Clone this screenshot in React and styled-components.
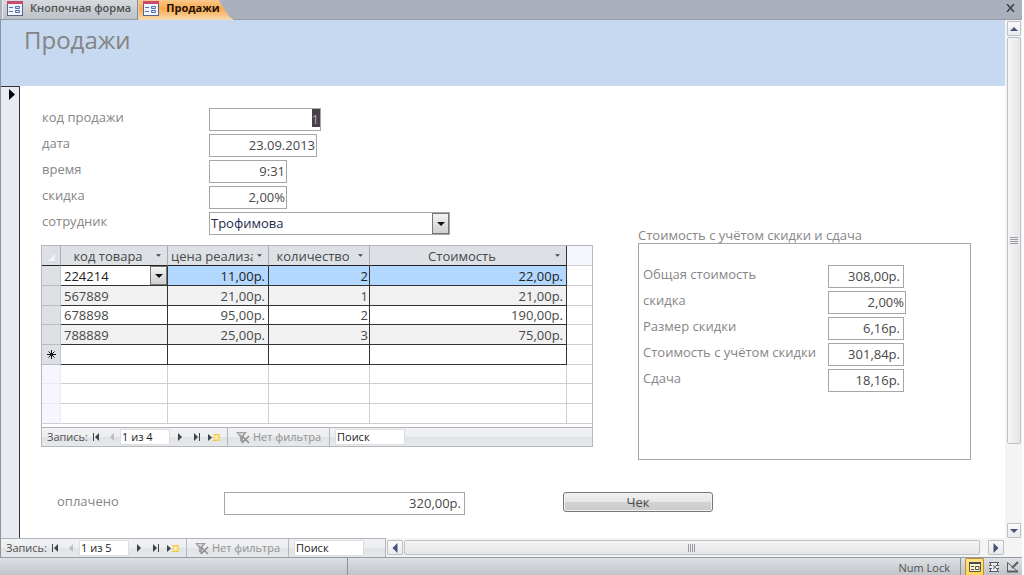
import React, { useState } from 'react';
import styled, { createGlobalStyle, css } from 'styled-components';

const GlobalStyle = createGlobalStyle`
  * {
    box-sizing: border-box;
  }

  body {
    margin: 0;
    background: #fff;
    color: #484848;
    font-family: 'Open Sans', 'Noto Sans', sans-serif;
    font-size: 13px;
    line-height: 18px;
  }

  button,
  input,
  select {
    margin: 0;
    padding: 0;
    border: 0;
    border-radius: 0;
    background: none;
    color: inherit;
    font: inherit;
    outline: none;
  }

  svg {
    display: block;
    flex: none;
  }
`;

const Window = styled.div`
  display: flex;
  flex-direction: column;
  min-height: 100vh;
  padding-right: 2px;
`;

/* ---------- tabs ---------- */

const TabBar = styled.nav`
  display: flex;
  height: 20px;
  padding-left: 2px;
  background: #abb1bc;
  border-bottom: 1px solid #949ba7;
`;

const Tab = styled.button`
  display: flex;
  align-items: center;
  gap: 7px;
  height: 19px;
  padding: 0 6px 3px 4px;
  border-left: 1px solid #e8ebee;
  border-right: 1px solid #858b95;
  background: linear-gradient(#d6dade, #bcc1c8);
  color: #505050;
  font-size: 11px;
  font-weight: 600;
  white-space: nowrap;

  ${({ $active }) => $active && css`
    height: 20px;
    padding: 0 14px 4px 4px;
    border-right: 0;
    border-left-color: #f6d9ae;
    background: linear-gradient(#f9c88c, #fba94a 45%, #f6dcb4);
    color: #1c1208;
    font-weight: 700;
    clip-path: polygon(0 0, calc(100% - 15px) 0, calc(100% - 5px) 16px, 100% 100%, 0 100%);
  `}
`;

const CloseButton = styled.button`
  display: flex;
  align-items: center;
  margin-left: auto;
  padding: 0 7px 4px;
`;

/* ---------- document ---------- */

const Document = styled.div`
  flex: 1;
  display: flex;
  border-left: 1px solid #8f949c;
`;

const FormPane = styled.div`
  flex: 1;
  min-width: 0;
  display: flex;
  flex-direction: column;
`;

const FormHeader = styled.header`
  height: 66px;
  padding: 3px 23px;
  background: #c7d9f0;
  color: #848484;

  h1 {
    margin: 0;
    font-size: 24px;
    line-height: 33px;
    font-weight: 400;
  }
`;

const FormBody = styled.div`
  flex: 1;
  display: flex;
`;

const RecordSelector = styled.div`
  width: 19px;
  padding: 2px 0 0 8px;
  border-top: 1px solid #333;
  border-right: 1px solid #333;
  background: #e8ebf1;
`;

const Detail = styled.main`
  flex: 1;
  min-width: 0;
  padding: 22px 34px 20px 21px;
`;

const Columns = styled.div`
  display: grid;
  grid-template-columns: minmax(0, 552px) minmax(0, 333px);
  align-items: start;
  gap: 45px;
`;

const Fields = styled.div`
  display: grid;
  gap: 3px;
  padding-left: ${({ $indent }) => $indent}px;
`;

const FieldRow = styled.div`
  display: grid;
  grid-template-columns: ${({ $labelWidth }) => $labelWidth}px minmax(0, 1fr);

  label {
    color: #868686;
    white-space: nowrap;
  }
`;

const TextBox = styled.input`
  width: ${({ $width }) => $width}px;
  max-width: 100%;
  height: 23px;
  padding: 0 ${({ $pad = 2 }) => $pad}px 2px 2px;
  border: 1px solid #a6a6a6;
  background: #fff;
  text-align: right;

  ${({ $selected }) => $selected && css`
    padding-right: 1px;
    background: linear-gradient(#454247, #454247) right top / 8px 18px no-repeat;
    color: #c79ac4;
  `}
`;

const ComboBox = styled.div`
  display: flex;
  width: ${({ $width }) => ($width ? `${$width}px` : '100%')};
  height: ${({ $width }) => ($width ? 23 : 19)}px;
  border: ${({ $width }) => ($width ? '1px solid #a6a6a6' : 0)};
  background: #fff;
  color: ${({ $width }) => ($width ? '#1f2a4d' : '#222')};
  position: relative;

  select {
    width: 100%;
    padding: 0 20px ${({ $width }) => ($width ? 2 : 0)}px ${({ $width }) => ($width ? 1 : 3)}px;
    appearance: none;
  }
`;

/* lies over the right end of the select */
const ComboArrow = styled.span`
  position: absolute;
  top: 0;
  right: 0;
  bottom: 0;
  display: flex;
  align-items: center;
  justify-content: center;
  width: 17px;
  border: 1px solid #777;
  background: linear-gradient(#f3f3f3, #cfcfcf);
  pointer-events: none;
`;

/* ---------- datasheet ---------- */

const Subform = styled.section`
  margin-top: 10px;
  border: 1px solid #b4b7bc;
`;

const Sheet = styled.table`
  width: 100%;
  table-layout: fixed;
  border-collapse: separate;
  border-spacing: 0;

  th,
  td {
    height: 20px;
    padding: 0;
    border-right: 1px solid #cfcfcf;
    border-bottom: 1px solid #cfcfcf;
    line-height: 18px;
    overflow: hidden;
    white-space: nowrap;
  }

  th:last-child,
  td:last-child {
    border-right: 0;
  }

  thead th {
    border-right-color: #a9adb3;
    border-bottom-color: #222;
    background: #dde1e6;
    font-weight: 400;
  }

  thead th:last-child {
    border-bottom-color: #cfcfcf;
    background: #f5f6fe;
  }

  thead th:nth-last-child(2) {
    border-right-color: #333;
  }
`;

const HeadCell = styled.div`
  display: flex;
  align-items: center;
  height: 19px;
  padding: 0 6px 0 3px;

  span {
    flex: 1;
    min-width: 0;
    overflow: hidden;
    text-align: center;
  }

  button {
    padding: 0 0 0 4px;
  }
`;

const Row = styled.tr`
  /* a record line is a little under 20px high */
  &:nth-child(3n) th,
  &:nth-child(3n) td {
    height: 19px;
    line-height: 17px;
  }

  th {
    border-right-color: #c4c8ce;
    border-bottom-color: #b9bdc4;
    background: ${({ $blank }) => ($blank ? '#f5f6fe' : '#dde1e6')};

    ${({ $blank }) => $blank && css`
      border-color: #e9eaf2;
    `}
  }

  td {
    text-align: right;
  }

  ${({ $blank, $current, $alt }) => !$blank && css`
    td:not(:last-child) {
      border-color: #333;
      background: ${$current ? '#b3d8ff' : $alt ? '#f1f1f1' : '#fff'};
      color: ${$current ? '#222' : 'inherit'};
    }
  `}

  &:last-child th,
  &:last-child td {
    border-bottom-color: #cfcfcf;
  }
`;

const Cell = styled.td`
  && {
    padding: 0 ${({ $money }) => ($money ? 3 : 1)}px 0 3px;
    text-align: ${({ $left }) => ($left ? 'left' : 'right')};
  }
`;

const ComboCell = styled.td`
  && {
    padding: 0;
  }
`;

const NewMark = styled.span`
  display: flex;
  justify-content: center;
`;

/* ---------- totals ---------- */

const Totals = styled.section`
  margin-top: 120px;

  h2 {
    margin: 0;
    color: #868686;
    font-size: 13px;
    line-height: 15px;
    font-weight: 400;
    white-space: nowrap;
  }
`;

const TotalsBox = styled.div`
  min-height: 217px;
  padding: 21px 4px;
  border: 1px solid #a6a6a6;
`;

const PayRow = styled.div`
  display: flex;
  align-items: flex-start;
  gap: 98px;
  margin-top: 32px;
  padding-left: 16px;
`;

const CheckButton = styled.button`
  width: 150px;
  height: 20px;
  border: 1px solid #777;
  border-radius: 3px;
  background: linear-gradient(#f0f0f0, #e6e6e6 50%, #d2d2d2 52%, #cbcbcb);
  box-shadow: inset 0 0 0 1px #f2f2f2;
`;

/* ---------- record navigation ---------- */

const NavBar = styled.div`
  display: flex;
  align-items: center;
  height: 19px;
  border-top: 1px solid #b0b4ba;
  background: linear-gradient(#f1f2f4, #eceef0 48%, #e1e4e7 52%, #e6e8eb);
  color: #505050;
  font-size: 11px;
  line-height: 16px;
  white-space: nowrap;

  ${Subform} & {
    margin-top: 3px;
  }
`;

const NavLabel = styled.label`
  width: 41px;
  margin-left: 5px;
`;

const NavButton = styled.button`
  display: flex;
  align-items: center;
  justify-content: center;
  width: ${({ $wide }) => ($wide ? 19 : 16)}px;
  height: 18px;
  color: #3f4249;

  &:disabled {
    color: #b9bcc2;
  }
`;

const NavInput = styled.input`
  width: ${({ $width }) => $width}px;
  height: 16px;
  padding: 0 1px;
  border: 1px solid #dcdee1;
  background: #fff;
  color: #222;

  &::placeholder {
    color: #222;
    opacity: 1;
  }
`;

const FilterButton = styled.button`
  display: flex;
  align-items: center;
  gap: 3px;
  width: 103px;
  height: 18px;
  margin: 0 5px 0 3px;
  padding-left: 8px;
  border-left: 1px solid #b4b8be;
  border-right: 1px solid #b4b8be;
  color: #929292;
`;

/* ---------- scroll bars ---------- */

const VScroll = styled.div`
  display: flex;
  flex-direction: column;
  width: 17px;
  padding: 1px 1px 19px 2px;
  background: #f4f4f5;
`;

const HScroll = styled.div`
  flex: 1;
  min-width: 0;
  display: flex;
  align-items: center;
  gap: 1px;
  height: 19px;
  padding: 0 1px;
  border-left: 1px solid #b0b4ba;
  background: #f4f4f5;
`;

const ScrollButton = styled.button`
  display: flex;
  align-items: center;
  justify-content: center;
  width: ${({ $wide }) => ($wide ? 16 : 14)}px;
  height: 15px;
  border: 1px solid #bcc0c7;
  border-radius: 1px;
  background: linear-gradient(#fafafa, #e9eaec);
  color: #46547a;
`;

const Thumb = styled.div`
  display: flex;
  align-items: center;
  justify-content: center;
  flex: ${({ $share }) => $share} 1 0;
  height: 15px;
  margin-top: ${({ $vertical }) => ($vertical ? 1 : 0)}px;
  border: 1px solid #bcc0c7;
  border-radius: 2px;
  background: linear-gradient(${({ $vertical }) => ($vertical ? '90deg, ' : '')}#f5f5f5, #e5e6e8);
`;

const Track = styled.div`
  flex: ${({ $share }) => $share} 1 0;
`;

const FormFooter = styled.div`
  display: flex;

  ${NavBar} {
    width: 384px;
  }
`;

/* ---------- status bar ---------- */

const StatusBar = styled.footer`
  display: flex;
  align-items: stretch;
  height: 18px;
  border-top: 1px solid #949aa3;
  background: linear-gradient(#dee2e7, #c0c4c9);
  color: #505050;
  font-size: 11px;
  line-height: 19px;
`;

const StatusCell = styled.div`
  width: ${({ $width }) => ($width ? `${$width}px` : 'auto')};
  flex: ${({ $width }) => ($width ? 'none' : 1)};
  padding-right: 10px;
  border-right: 1px solid #8b9097;
  text-align: right;
`;

const ViewButtons = styled.div`
  display: flex;
  width: 61px;
  padding-left: 4px;
`;

const ViewButton = styled.button`
  display: flex;
  align-items: center;
  justify-content: center;
  width: 19px;
  border: 1px solid ${({ $active }) => ($active ? '#c08c2c' : 'transparent')};
  border-bottom: 0;
  border-radius: 2px 2px 0 0;
  background: ${({ $active }) => ($active ? 'linear-gradient(#ffe58a, #ffd557)' : 'none')};
`;

/* ---------- icons ---------- */

const FormIcon = () => (
  <svg width="16" height="15" viewBox="0 0 16 15">
    <rect x="0" y="2" width="16" height="13" fill="#56658c" />
    <rect x="1" y="3" width="14" height="11" fill="#f1f4fb" />
    <rect x="0" y="0" width="16" height="3" fill="#c94a6e" />
    <path d="M2 6.500h4M2 10.500h4" stroke="#5470b0" />
    <path d="M8.500 5.500h4v2h-4zM8.500 9.500h4v2h-4z" fill="#dfe6f6" stroke="#5470b0" />
  </svg>
);

const Caret = ({ width = 8, height = 4, color = '#111' }) => (
  <svg width={width} height={height} viewBox="0 0 8 4">
    <path d="M0 0h8L4 4z" fill={color} />
  </svg>
);

const arrows = {
  first: 'M1 0h1v8H1zM7 0v8L3 4z',
  prev: 'M6 0v8L2 4z',
  next: 'M2 0v8l4-4z',
  last: 'M1 0v8l4-4zM6 0h1v8H6z',
  up: 'M0 6h8L4 2z',
  down: 'M0 2h8L4 6z',
};

const Arrow = ({ name, size = 8 }) => (
  <svg width={size} height={size} viewBox="0 0 8 8">
    <path d={arrows[name]} fill="currentColor" />
  </svg>
);

const NewRecordIcon = () => (
  <svg width="13" height="9" viewBox="0 0 13 9">
    <path d="M0 1v7l4-3.500z" fill="#3f4249" />
    <rect x="6" y="1" width="6" height="7" fill="#f7dc74" />
    <path d="M5 1.500h7M5 4.500h7M5 7.500h7" stroke="#e9c03c" strokeDasharray="1 1" />
    <circle cx="8.500" cy="4.500" r="1.500" fill="#fdf3c0" />
  </svg>
);

const FilterIcon = () => (
  <svg width="14" height="13" viewBox="0 0 14 13">
    <path d="M0 1h11L7 6v6L4 10V6z" fill="#a0a0a0" />
    <path d="M2 2h6L6 5z" fill="#d8d8d8" />
    <path d="M6 5l7 7M13 5l-7 7" stroke="#8d8d8d" strokeWidth="1.500" />
  </svg>
);

const Grip = ({ vertical }) => (
  <svg width="8" height="8" viewBox="0 0 8 8">
    <path
      d={vertical ? 'M0 1.500h8M0 3.500h8M0 5.500h8M0 7.500h8' : 'M.5 0v8M2.500 0v8M4.500 0v8M6.500 0v8'}
      stroke="#9a9da2"
    />
  </svg>
);

const FormViewIcon = () => (
  <svg width="12" height="10" viewBox="0 0 12 10">
    <path d="M.5 .5h11v9H.5z" fill="#f9f3d2" stroke="#5b5540" />
    <path d="M0 1h12" stroke="#4b4b4b" strokeWidth="2" />
    <path d="M2 4.500h3M2 7.500h3M6.500 4.500h3.500v3H6.500z" fill="none" stroke="#5b5540" />
  </svg>
);

const LayoutViewIcon = () => (
  <svg width="12" height="12" viewBox="0 0 12 12">
    <path d="M2 2h8v8H2z" fill="#eceef0" />
    <path d="M1 1.500h10M1 10.500h10M1 4.500h3M8 4.500h3M1 7.500h3M8 7.500h3M2.500 1v3M9.500 1v3M2.500 8v3M9.500 8v3M5 4.500l3 1.500-3 1.500" fill="none" stroke="#5a5d61" />
  </svg>
);

const DesignViewIcon = () => (
  <svg width="13" height="12" viewBox="0 0 13 12">
    <path d="M1.500 1.500v9h10z" fill="#d9dcdf" stroke="#5a5d61" />
    <path d="M12 1L6 7" stroke="#5a5d61" strokeWidth="2" />
    <path d="M1 10.500h11" stroke="#5a5d61" strokeWidth="2" />
  </svg>
);

/* ---------- data ---------- */

const saleFields = [
  { id: 'sale', label: 'код продажи', value: '1', width: 112, selected: true },
  { id: 'date', label: 'дата', value: '23.09.2013', width: 108, pad: 1 },
  { id: 'time', label: 'время', value: '9:31', width: 78, pad: 1 },
  { id: 'discount', label: 'скидка', value: '2,00%', width: 78, pad: 1 },
];

const totalFields = [
  { id: 'total', label: 'Общая стоимость', value: '308,00р.', width: 76, pad: 3 },
  { id: 'rate', label: 'скидка', value: '2,00%', width: 78, pad: 1 },
  { id: 'size', label: 'Размер скидки', value: '6,16р.', width: 76, pad: 3 },
  { id: 'net', label: 'Стоимость с учётом скидки', value: '301,84р.', width: 76, pad: 3 },
  { id: 'change', label: 'Сдача', value: '18,16р.', width: 76, pad: 3 },
];

const columns = ['код товара', 'цена реализации', 'количество', 'Стоимость'];

const items = [
  { code: '224214', price: '11,00р.', count: 2, sum: '22,00р.' },
  { code: '567889', price: '21,00р.', count: 1, sum: '21,00р.' },
  { code: '678898', price: '95,00р.', count: 2, sum: '190,00р.' },
  { code: '788889', price: '25,00р.', count: 3, sum: '75,00р.' },
];

function Field({ field, labelWidth }) {
  const [value, setValue] = useState(field.value);
  return (
    <FieldRow $labelWidth={labelWidth}>
      <label htmlFor={field.id}>{field.label}</label>
      <TextBox
        id={field.id}
        type="text"
        value={value}
        onChange={(e) => setValue(e.target.value)}
        $width={field.width}
        $pad={field.pad}
        $selected={field.selected}
      />
    </FieldRow>
  );
}

function RecordNav({ id, position }) {
  return (
    <NavBar>
      <NavLabel htmlFor={id}>Запись:</NavLabel>
      <NavButton aria-label="Первая запись"><Arrow name="first" /></NavButton>
      <NavButton aria-label="Предыдущая запись" disabled><Arrow name="prev" /></NavButton>
      <NavInput id={id} type="text" defaultValue={position} $width={50} />
      <NavButton $wide aria-label="Следующая запись"><Arrow name="next" /></NavButton>
      <NavButton aria-label="Последняя запись"><Arrow name="last" /></NavButton>
      <NavButton $wide aria-label="Новая запись"><NewRecordIcon /></NavButton>
      <FilterButton>
        <FilterIcon />
        Нет фильтра
      </FilterButton>
      <NavInput type="text" placeholder="Поиск" aria-label="Поиск" $width={70} />
    </NavBar>
  );
}

function Datasheet() {
  return (
    <Subform>
      <Sheet>
        <colgroup>
          <col width="19" />
          <col width="107" />
          <col width="101" />
          <col width="101" />
          <col width="197" />
          <col />
        </colgroup>
        <thead>
          <tr>
            <th>
              <svg width="18" height="14" viewBox="0 0 18 14">
                <path d="M14 2v11H4z" fill="#eef1f5" stroke="#cdd2d9" />
              </svg>
            </th>
            {columns.map((name) => (
              <th key={name} scope="col">
                <HeadCell>
                  <span>{name}</span>
                  <button aria-label={`Фильтр: ${name}`}>
                    <Caret width={5} height={3} color="#444" />
                  </button>
                </HeadCell>
              </th>
            ))}
            <th />
          </tr>
        </thead>
        <tbody>
          {items.map((item, i) => (
            <Row key={item.code} $current={i === 0} $alt={i % 2 === 1}>
              <th />
              {i === 0 ? (
                <ComboCell>
                  <ComboBox>
                    <select aria-label="код товара" defaultValue={item.code}>
                      {items.map(({ code }) => <option key={code}>{code}</option>)}
                    </select>
                    <ComboArrow><Caret /></ComboArrow>
                  </ComboBox>
                </ComboCell>
              ) : (
                <Cell $left>{item.code}</Cell>
              )}
              <Cell $money>{item.price}</Cell>
              <Cell>{item.count}</Cell>
              <Cell $money>{item.sum}</Cell>
              <td />
            </Row>
          ))}
          <Row>
            <th>
              <NewMark>
                <svg width="9" height="9" viewBox="0 0 9 9">
                  <path d="M4.500 0v9M0 4.500h9M1.500 1.500l6 6M7.500 1.500l-6 6" stroke="#111" />
                </svg>
              </NewMark>
            </th>
            <td /><td /><td /><td /><td />
          </Row>
          {[0, 1, 2].map((n) => (
            <Row key={n} $blank>
              <th />
              <td /><td /><td /><td /><td />
            </Row>
          ))}
        </tbody>
      </Sheet>
      <RecordNav id="item-record" position="1 из 4" />
    </Subform>
  );
}

export default function App() {
  return (
    <>
      <GlobalStyle />
      <Window>
        <TabBar>
          <Tab><FormIcon />Кнопочная форма</Tab>
          <Tab $active><FormIcon />Продажи</Tab>
          <CloseButton aria-label="Закрыть">
            <svg width="9" height="8" viewBox="0 0 9 8">
              <path d="M1 0l7 8M8 0L1 8" stroke="#3c4048" strokeWidth="1.500" />
            </svg>
          </CloseButton>
        </TabBar>
        <Document>
          <FormPane>
            <FormHeader>
              <h1>Продажи</h1>
            </FormHeader>
            <FormBody>
              <RecordSelector>
                <svg width="6" height="11" viewBox="0 0 6 11">
                  <path d="M0 0v11l6-5.500z" fill="#000" />
                </svg>
              </RecordSelector>
              <Detail>
                <Columns>
                  <div>
                    <Fields $indent={1}>
                      {saleFields.map((field) => (
                        <Field key={field.id} field={field} labelWidth={167} />
                      ))}
                      <FieldRow $labelWidth={167}>
                        <label htmlFor="employee">сотрудник</label>
                        <ComboBox $width={241}>
                          <select id="employee" defaultValue="Трофимова">
                            <option>Трофимова</option>
                          </select>
                          <ComboArrow><Caret /></ComboArrow>
                        </ComboBox>
                      </FieldRow>
                    </Fields>
                    <Datasheet />
                  </div>
                  <Totals>
                    <h2>Стоимость с учётом скидки и сдача</h2>
                    <TotalsBox>
                      <Fields $indent={0}>
                        {totalFields.map((field) => (
                          <Field key={field.id} field={field} labelWidth={185} />
                        ))}
                      </Fields>
                    </TotalsBox>
                  </Totals>
                </Columns>
                <PayRow>
                  <FieldRow $labelWidth={167}>
                    <label htmlFor="paid">оплачено</label>
                    <TextBox id="paid" type="text" defaultValue="320,00р." $width={241} $pad={3} />
                  </FieldRow>
                  <CheckButton>Чек</CheckButton>
                </PayRow>
              </Detail>
            </FormBody>
            <FormFooter>
              <RecordNav id="sale-record" position="1 из 5" />
              <HScroll>
                <ScrollButton $wide aria-label="Влево"><Arrow name="prev" size={10} /></ScrollButton>
                <Thumb $share={99}><Grip /></Thumb>
                <Track $share={1} />
                <ScrollButton $wide aria-label="Вправо"><Arrow name="next" size={10} /></ScrollButton>
              </HScroll>
            </FormFooter>
          </FormPane>
          <VScroll>
            <ScrollButton aria-label="Вверх"><Arrow name="up" /></ScrollButton>
            <Thumb $vertical $share={41}><Grip vertical /></Thumb>
            <Track $share={8} />
            <ScrollButton aria-label="Вниз"><Arrow name="down" /></ScrollButton>
          </VScroll>
        </Document>
        <StatusBar>
          <StatusCell $width={348} />
          <StatusCell>Num Lock</StatusCell>
          <ViewButtons>
            <ViewButton $active aria-label="Режим формы"><FormViewIcon /></ViewButton>
            <ViewButton aria-label="Режим макета"><LayoutViewIcon /></ViewButton>
            <ViewButton aria-label="Конструктор"><DesignViewIcon /></ViewButton>
          </ViewButtons>
        </StatusBar>
      </Window>
    </>
  );
}
